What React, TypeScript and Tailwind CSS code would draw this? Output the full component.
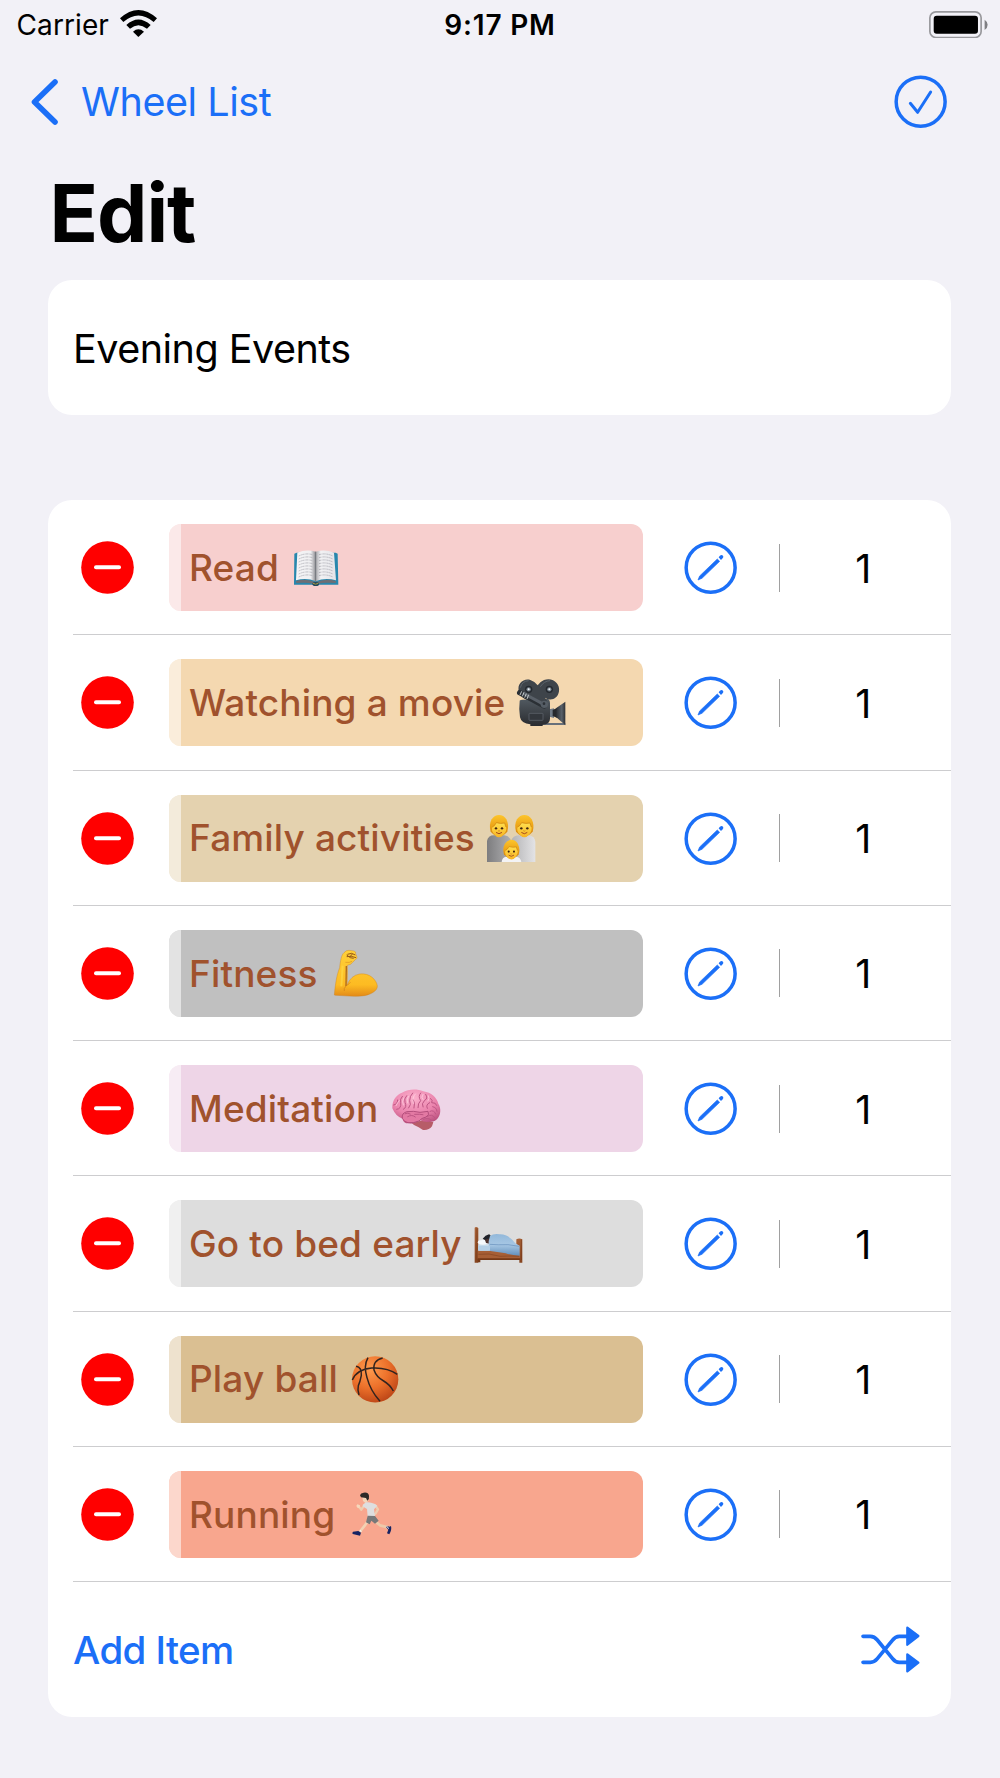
import type { ReactNode } from 'react';

const BLUE = '#1b6ff7';

function Emoji({ box, children }: { box: string; children: ReactNode }) {
  return (
    <svg viewBox={box} className="h-12 w-12 shrink-0 overflow-visible">
      {children}
    </svg>
  );
}

const Book = () => (
  <Emoji box="756 161 144 144">
    <defs>
      <linearGradient id="pageL" x1="0" x2="1">
        <stop offset="0" stopColor="#f4f4f6" />
        <stop offset=".75" stopColor="#f0f0f2" />
        <stop offset="1" stopColor="#8b8b90" />
      </linearGradient>
      <linearGradient id="pageR" x1="0" x2="1">
        <stop offset="0" stopColor="#a5a5aa" />
        <stop offset=".25" stopColor="#f2f2f4" />
        <stop offset="1" stopColor="#e3e3e8" />
      </linearGradient>
    </defs>
    <path d="M763 190L770 187H887L893 190L895 283H838Q828 291 818 283H762Z" fill="#2787ad" />
    <path d="M768 272Q800 263 827 276Q856 263 888 272L887 278Q850 275 838 280H818Q800 275 769 278Z" fill="#6c6f76" />
    <path d="M772 187Q800 175 827 184V273Q800 261 768 270Z" fill="url(#pageL)" />
    <path d="M827 184Q855 175 882 187L888 270Q855 261 827 273Z" fill="url(#pageR)" />
    <path d="M827 184V274" stroke="#77777c" strokeWidth="3" />
    <g stroke="#8d8d96" strokeWidth="1.5" strokeDasharray="6 1.5 3 1" fill="none">
      {[0, 9, 18, 27, 36, 45, 54, 63].map((y) => (
        <path key={y} d={`M776 ${197 + y}Q797 ${187 + y} 818 ${193 + y}M837 ${193 + y}Q857 ${187 + y} 879 ${197 + y}`} />
      ))}
    </g>
    <ellipse cx="827" cy="281" rx="10" ry="6" fill="#23485a" />
    <path d="M819 279Q827 284 835 279" stroke="#a59a42" strokeWidth="3" fill="none" />
  </Emoji>
);

const Camera = () => (
  <Emoji box="54 57 144 144">
    <defs>
      <linearGradient id="camBody" x1="0" x2="0" y1="0" y2="1">
        <stop offset="0" stopColor="#525a61" />
        <stop offset="1" stopColor="#292b2f" />
      </linearGradient>
      <linearGradient id="camHood" x1="0" x2="1">
        <stop offset="0" stopColor="#2c3035" />
        <stop offset=".6" stopColor="#59616a" />
        <stop offset="1" stopColor="#2d3034" />
      </linearGradient>
    </defs>
    <path d="M110 189H196V195H128Z" fill="#68707a" />
    <path d="M148 148L162 145V174L148 170Z" fill="#6f7a86" />
    <path d="M158 150L172 143V174L158 168Z" fill="#26292d" />
    <path d="M169 144L196 125V196L169 172Z" fill="url(#camHood)" />
    <path d="M59 124Q58 119 66 119L143 117Q150 119 150 130V176Q150 192 128 194V198H91V193Q64 191 60 172Q56 145 59 124Z" fill="url(#camBody)" />
    <path d="M57 96C49 70 72 54 91 60Q104 64 113 76Q120 65 132 60C158 50 181 71 177 94C174 117 151 125 135 113L142 124L120 132L80 119Q63 113 57 96Z" fill="#3e444a" />
    <path d="M61 83Q66 63 86 62M121 80Q132 63 150 62" stroke="#5d656c" strokeWidth="3" fill="none" />
    <path d="M59 98L132 138" stroke="#2b3035" strokeWidth="16" strokeLinecap="round" />
    <path d="M72 101L133 134" stroke="#596068" strokeWidth="9" strokeLinecap="round" />
    <path d="M60 105L65 94M67 109L72 97M74 113L79 101M81 117L86 104" stroke="#d8dde0" strokeWidth="2.5" />
    <circle cx="133" cy="133" r="11" fill="#555d65" />
    <circle cx="132" cy="131" r="4" fill="#2c3136" />
    <circle cx="86" cy="88" r="11" fill="#23282e" />
    <circle cx="148" cy="88" r="11" fill="#23282e" />
    <circle cx="86" cy="88" r="6.5" fill="#77828c" />
    <circle cx="148" cy="88" r="6.5" fill="#77828c" />
    <circle cx="86" cy="88" r="3" fill="#eef2f5" />
    <circle cx="148" cy="88" r="3" fill="#eef2f5" />
    <rect x="87" y="160" width="42" height="21" rx="2" fill="#33373c" stroke="#656b72" strokeWidth="2" />
  </Emoji>
);

function Head({ x, y, s }: { x: number; y: number; s: number }) {
  return (
    <g transform={`translate(${x} ${y}) scale(${s})`}>
      <path d="M-25 20Q-31 -1 -22 -17Q-13 -30 0 -30Q14 -30 22 -17Q31 0 25 20Q12 34 0 34Q-12 34 -25 20Z" fill="url(#hair)" />
      <path d="M-20 6Q-13 3 -8 -7Q5 -3 17 -6Q19 2 21 6Q24 17 15 28Q8 37 0 37Q-8 37 -15 28Q-24 17 -20 6Z" fill="url(#skin)" />
      <path d="M-20 6Q-13 3 -8 -7Q5 -3 17 -6Q19 2 21 6" stroke="#c97e0d" strokeWidth="2" fill="none" />
      <circle cx="-9" cy="10" r="3.6" fill="#3f240f" />
      <circle cx="9" cy="10" r="3.6" fill="#3f240f" />
      <path d="M-3 17Q0 20 3 17" stroke="#c07a19" strokeWidth="2" fill="none" />
      <path d="M-8 23Q0 30 8 23" stroke="#a34a20" strokeWidth="3" fill="none" strokeLinecap="round" />
    </g>
  );
}

const Family = () => (
  <Emoji box="51 42 144 144">
    <defs>
      <linearGradient id="hair" x1="0" x2="0" y1="0" y2="1">
        <stop offset="0" stopColor="#fdc52c" />
        <stop offset=".5" stopColor="#eda518" />
        <stop offset="1" stopColor="#cf7f0b" />
      </linearGradient>
      <linearGradient id="skin" x1="0" x2="0" y1="0" y2="1">
        <stop offset="0" stopColor="#ffdf50" />
        <stop offset="1" stopColor="#f8b423" />
      </linearGradient>
      <linearGradient id="coatL" x1="0" x2="1">
        <stop offset="0" stopColor="#7d7d7f" />
        <stop offset="1" stopColor="#b0b0b2" />
      </linearGradient>
      <linearGradient id="coatR" x1="0" x2="1">
        <stop offset="0" stopColor="#b3b3b5" />
        <stop offset="1" stopColor="#e3e3e5" />
      </linearGradient>
    </defs>
    <path d="M51 186V123Q54 106 72 106H103Q121 108 123 125V186Z" fill="url(#coatL)" />
    <path d="M123 186V123Q129 107 146 106H176Q194 109 196 125V186Z" fill="url(#coatR)" />
    <Head x={87} y={75} s={1} />
    <Head x={163} y={75} s={1} />
    <path d="M95 186Q96 171 109 170H138Q152 171 154 186Z" fill="#f3f3f5" />
    <Head x={124} y={146} s={0.88} />
  </Emoji>
);

const Arm = () => (
  <Emoji box="36 28 144 144">
    <defs>
      <linearGradient id="muscle" x1="0" x2="0" y1="0" y2="1">
        <stop offset="0" stopColor="#ffd13a" />
        <stop offset=".75" stopColor="#fdbb22" />
        <stop offset="1" stopColor="#e38a18" />
      </linearGradient>
    </defs>
    <path d="M43 166C46 134 50 105 59 84C61 65 64 45 72 39Q79 31 87 32L102 34Q109 36 107 42L111 52Q112 57 107 59L98 68Q94 75 82 77C83 98 82 119 81 137Q92 107 119 103C150 99 169 121 172 138C174 153 151 167 124 169C97 172 68 167 46 167Z" fill="url(#muscle)" stroke="#cc821f" strokeWidth="1.2" />
    <path d="M79 79L78 139" stroke="#ae691d" strokeWidth="4" />
    <path d="M68 78L64 140" stroke="#ffdb48" strokeWidth="6" opacity=".65" />
    <path d="M78 139Q70 147 73 154M82 137Q88 131 91 128" stroke="#cc7919" strokeWidth="2" fill="none" />
    <path d="M82 44L95 41L106 46M80 51L94 50L108 54M80 46Q91 57 101 56M97 43L91 50" stroke="#955616" strokeWidth="3" fill="none" strokeLinejoin="round" />
    <path d="M76 68Q89 70 96 65" stroke="#dc931f" strokeWidth="2" fill="none" />
  </Emoji>
);

const Brain = () => (
  <Emoji box="216 434 144 144">
    <defs>
      <radialGradient id="cortex" cx=".45" cy=".25" r=".8">
        <stop offset="0" stopColor="#fbb0cc" />
        <stop offset=".6" stopColor="#ea82ac" />
        <stop offset="1" stopColor="#b94f7c" />
      </radialGradient>
    </defs>
    <path d="M274 547Q282 556 296 561L309 569Q326 571 336 558L340 546L318 538Z" fill="#b75c68" />
    <path d="M217 504C216 478 231 462 246 457C267 445 292 446 310 453C334 457 350 471 355 490C364 504 362 522 354 533Q346 545 330 544Q313 547 301 540Q284 552 267 549Q250 550 248 535Q228 530 217 504Z" fill="url(#cortex)" />
    <path d="M247 534Q244 518 261 514Q281 511 300 516L324 513Q330 523 318 530Q304 533 297 542Q281 549 264 547Q252 545 247 534Z" fill="#e379a3" stroke="#a94674" strokeWidth="2.5" />
    <g fill="none" stroke="#bd5583" strokeWidth="3" strokeLinecap="round">
      <path d="M221 494Q233 492 233 479M230 507Q245 506 242 486Q239 477 247 468M250 507Q262 501 255 486Q251 476 260 466M266 503Q275 493 269 481Q269 467 278 458M282 503Q286 488 280 478M294 502Q293 489 302 481Q293 468 302 458M309 500Q303 490 314 480Q325 475 317 462M322 504Q316 493 329 487M331 474Q340 480 335 487Q348 486 350 495M338 499Q350 501 351 513M330 513Q342 507 347 521M322 528Q336 519 344 532M310 537Q325 531 334 539" />
      <path d="M263 529Q276 521 286 530M284 522Q300 521 309 523M255 520Q264 516 271 521" />
    </g>
    <g fill="none" stroke="#ffd0e1" strokeWidth="3" strokeLinecap="round" opacity=".75">
      <path d="M238 481Q232 487 228 496M251 473Q244 483 250 494M265 468Q258 479 263 488M286 461Q276 471 280 489M309 462Q302 472 309 478M325 466Q330 475 324 482" />
    </g>
  </Emoji>
);

const Bed = () => (
  <Emoji box="42 30 144 144">
    <defs>
      <linearGradient id="wood" x1="0" x2="0" y1="0" y2="1">
        <stop offset="0" stopColor="#a96339" />
        <stop offset="1" stopColor="#85441f" />
      </linearGradient>
      <linearGradient id="quilt" x1="0" x2="0" y1="0" y2="1">
        <stop offset="0" stopColor="#92b8da" />
        <stop offset=".5" stopColor="#a7c7e4" />
        <stop offset="1" stopColor="#628fbb" />
      </linearGradient>
    </defs>
    <path d="M44 53Q48 48 55 54V158H44Z" fill="url(#wood)" />
    <path d="M169 88Q178 83 187 88V158H178V149H169Z" fill="url(#wood)" />
    <path d="M52 120H180V148H52Z" fill="#a75f35" />
    <path d="M55 103H91V122H55Z" fill="#c9deee" />
    <ellipse cx="69" cy="97" rx="16" ry="7" fill="#f5f9fc" />
    <path d="M68 86Q76 75 87 73Q96 76 93 96Q80 95 68 86Z" fill="#202229" />
    <path d="M75 89L89 85V101L78 99Z" fill="#4e3430" />
    <path d="M90 78Q101 70 119 73C140 72 155 86 166 100L179 107V137Q154 136 137 130L86 122V94Z" fill="url(#quilt)" />
    <path d="M55 107L90 108V122H55Z" fill="#b4d0e7" />
    <path d="M89 103Q115 105 144 104L178 109" stroke="#638dba" strokeWidth="2" fill="none" />
    <path d="M55 133Q86 128 121 139Q147 137 177 139" stroke="#783c1d" strokeWidth="1.5" fill="none" />
    <path d="M53 145H180V150H61V157H53Z" fill="#753916" />
    <path d="M51 55V150M184 89V150" stroke="#733717" strokeWidth="2" />
  </Emoji>
);

const Ball = () => (
  <Emoji box="93 45 144 144">
    <defs>
      <radialGradient id="orange" cx=".38" cy=".28" r=".75">
        <stop offset="0" stopColor="#ff9b4e" />
        <stop offset=".55" stopColor="#ec702a" />
        <stop offset="1" stopColor="#bd4617" />
      </radialGradient>
    </defs>
    <circle cx="165.5" cy="118" r="69.5" fill="url(#orange)" />
    <path d="M97 120Q110 88 155 84Q201 81 232 103M144 53Q130 77 141 113Q151 152 180 184M108 79Q126 82 124 106Q120 126 115 137Q112 149 117 165M188 54Q158 61 162 90Q169 111 191 123Q210 134 220 153" fill="none" stroke="#33241f" strokeWidth="4.5" />
  </Emoji>
);

const Runner = () => (
  <Emoji box="87 451 144 144">
    <g strokeLinecap="round" strokeLinejoin="round" fill="none">
      <path d="M161 541L180 557L204 563" stroke="#edc9aa" strokeWidth="8" />
      <path d="M146 541L134 558L119 577" stroke="#f2d1b3" strokeWidth="8" />
      <path d="M134 495L124 510L115 499" stroke="#efcdb0" strokeWidth="7" />
      <path d="M166 497L174 509L167 521L160 527" stroke="#efcdb0" strokeWidth="7" />
    </g>
    <path d="M109 499L112 494L120 497L119 504L113 505Z" fill="#f6d8bc" />
    <path d="M127 473L146 469L145 482Q143 489 136 490L129 484Z" fill="#f5d5b8" />
    <path d="M120 467Q122 460 131 459Q145 457 147 468Q149 477 142 483L138 475L123 473Z" fill="#2d2928" />
    <path d="M138 488Q150 486 163 492L172 498L162 509L165 531H143L141 508L130 501L128 496Z" fill="#dededf" />
    <path d="M143 528L165 529L176 543L165 552L154 543L149 554L138 548Z" fill="#777879" />
    <path d="M198 562L204 559Q207 563 213 559Q216 570 208 584L201 581L205 570Z" fill="#162363" />
    <path d="M115 574L123 579L120 588L98 583Q96 579 99 576Z" fill="#162363" />
    <path d="M201 560L206 567M120 571L124 577" stroke="#f6f7f9" strokeWidth="3" />
  </Emoji>
);

const items = [
  { label: 'Read', fill: 'bg-[#f7cfce]', width: 'w-[103px]', icon: <Book /> },
  { label: 'Watching a movie', fill: 'bg-[#f4d8b0]', width: 'w-[329px]', icon: <Camera /> },
  { label: 'Family activities', fill: 'bg-[#e4d2af]', width: 'w-[298px]', icon: <Family /> },
  { label: 'Fitness', fill: 'bg-[#c0c0c0]', width: 'w-[143px]', icon: <Arm /> },
  { label: 'Meditation', fill: 'bg-[#eed5e7]', width: 'w-[203px]', icon: <Brain /> },
  { label: 'Go to bed early', fill: 'bg-[#dddddd]', width: 'w-[285px]', icon: <Bed /> },
  { label: 'Play ball', fill: 'bg-[#dabf92]', width: 'w-[162px]', icon: <Ball /> },
  { label: 'Running', fill: 'bg-[#f8a68e]', width: 'w-[160px]', icon: <Runner /> },
];

function PencilIcon() {
  return (
    <svg viewBox="74 152 160 160" className="h-[53.3px] w-[53.3px]">
      <circle cx="154" cy="232" r="73.5" fill="none" stroke={BLUE} strokeWidth="10.5" />
      <path d="M116 269L121 257L174 206L181 213L128 264Z" fill={BLUE} stroke={BLUE} strokeWidth="2" strokeLinejoin="round" />
      <path d="M178 201L182 196Q187 192 191 196Q194 200 190 204L185 209Z" fill={BLUE} />
    </svg>
  );
}

export default function App() {
  return (
    <div className="flex h-[1778px] w-[1000px] flex-col overflow-hidden bg-[#f2f1f7] font-['Inter',sans-serif] text-black">
      <header className="grid h-[50px] grid-cols-3 items-center px-[16.5px]">
        <div className="flex items-center">
          <span className="w-[103.5px] text-[28px] leading-[50px] tracking-[0.1px] whitespace-nowrap">Carrier</span>
          <svg viewBox="360 30 111 81" className="mb-[3px] h-[27px] w-[37px]">
            <path d="M360 55Q415 5 471 55L461 66Q415 27 370 66Z" />
            <path d="M379 75Q415 42 452 75L441 86Q415 65 390 86Z" />
            <path d="M399 95Q415 81 432 95L415 111Z" />
          </svg>
        </div>
        <span className="text-center text-[28px] leading-[50px] font-semibold tracking-[0.8px]">9:17 PM</span>
        <svg viewBox="205 31 177 82" className="mb-[1.5px] -mr-[4px] h-[27.3px] w-[59px] justify-self-end">
          <rect x="207.5" y="33.5" width="154" height="77" rx="18" fill="none" stroke="#98989c" strokeWidth="5" />
          <rect x="219" y="45" width="133" height="54" rx="9" />
          <path d="M372 57Q381 63 381 72Q381 82 372 88Z" fill="#7f7f83" />
        </svg>
      </header>

      <nav className="flex h-[104px] items-center justify-between pr-[53px] pl-[31px]">
        <div className="flex items-center">
          <svg viewBox="0 0 27 46" className="h-[46px] w-[27px]">
            <path d="M24 3L3.5 23L24 43" fill="none" stroke={BLUE} strokeWidth="5.6" strokeLinecap="round" strokeLinejoin="round" />
          </svg>
          <span className="ml-[23px] text-[39.5px] leading-[50px] tracking-[-0.45px] text-[#1b6ff7]">Wheel List</span>
        </div>
        <svg viewBox="102 226 160 160" className="h-[53.3px] w-[53.3px]">
          <circle cx="182" cy="306" r="73.5" fill="none" stroke={BLUE} strokeWidth="10.5" />
          <path d="M151 311L173 338L212 277" fill="none" stroke={BLUE} strokeWidth="9" strokeLinecap="round" strokeLinejoin="round" />
        </svg>
      </nav>

      <main className="pr-[48.6px] pl-[48.4px]">
        <h1 className="h-[126px] pl-px text-[80px] leading-[118px] font-bold tracking-[-1px]">Edit</h1>
        <div className="flex h-[135px] items-center rounded-[24px] bg-white pt-[5px] pl-[24.6px] text-[39.5px] tracking-[-0.5px]">Evening Events</div>

        <section className="mt-[85px] flex h-[1217px] flex-col rounded-[24px] bg-white pl-[24.6px]">
          {items.map((item) => (
            <div key={item.label} className="flex h-[135.25px] shrink-0 items-center border-b border-[#cdcdcf] pt-[1.2px] pl-[8.5px]">
              <svg viewBox="0 0 53 53" className="h-[53px] w-[53px]">
                <circle cx="26.5" cy="26.5" r="26.3" fill="#ff0000" />
                <path d="M15 26.3H38" stroke="white" strokeWidth="4" strokeLinecap="round" />
              </svg>
              <div className={`ml-[34.5px] flex h-[87px] w-[474.5px] overflow-hidden rounded-[12px] ${item.fill}`}>
                <div className="w-[12px] bg-white/55" />
                <div className="flex items-center pl-[8px]">
                  <span className={`text-[37px] font-medium tracking-[0.15px] whitespace-nowrap text-[#a0522d] ${item.width}`}>{item.label}</span>
                  {item.icon}
                </div>
              </div>
              <div className="ml-[41px]"><PencilIcon /></div>
              <div className="ml-[41.5px] h-[48px] w-px bg-[#a0a0a0]" />
              <span className="ml-[75px] w-[24px] pt-[3px] text-[39.5px]">1</span>
            </div>
          ))}
          <div className="flex flex-1 items-center justify-between pr-[31.4px]">
            <span className="pt-[2px] text-[38.5px] font-medium tracking-[-0.6px] text-[#1b6ff7]">Add Item</span>
            <svg viewBox="63 138 177 140" className="h-[46.7px] w-[59px]">
              <path d="M69 169H91Q103 169 112 180L157 235Q166 247 178 247H202M69 247H91Q103 247 112 236L157 181Q166 169 178 169H202" fill="none" stroke={BLUE} strokeWidth="11" strokeLinecap="round" />
              <path d="M202 143L235 168L202 194ZM202 223L235 248L202 274Z" fill={BLUE} stroke={BLUE} strokeWidth="7" strokeLinejoin="round" />
            </svg>
          </div>
        </section>
      </main>
    </div>
  );
}
